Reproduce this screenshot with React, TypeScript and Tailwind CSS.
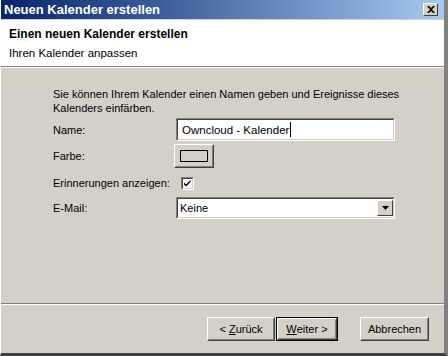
import React from 'react'

const font = { fontFamily: '"Liberation Sans", Arial, sans-serif' }

function ClassicButton({ children, primary, width }: { children: React.ReactNode; primary?: boolean; width: string }) {
  return (
    <div className={`${width} h-[24px] ${primary ? 'border border-black' : ''}`}>
      <div className="h-full border border-t-white border-l-white border-r-[#404040] border-b-[#404040]">
        <div className="flex h-full items-center justify-center border border-t-[#d4d0c8] border-l-[#d4d0c8] border-r-[#808080] border-b-[#808080] bg-[#d4d0c8] text-[11px] text-black">
          {children}
        </div>
      </div>
    </div>
  )
}

function Sunken({ children, className }: { children: React.ReactNode; className?: string }) {
  return (
    <div className={`border border-t-[#808080] border-l-[#808080] border-r-white border-b-white ${className ?? ''}`}>
      <div className="h-full border border-t-[#404040] border-l-[#404040] border-r-[#d4d0c8] border-b-[#d4d0c8] bg-white">
        {children}
      </div>
    </div>
  )
}

export default function App() {
  return (
    <div style={font} className="flex h-[356px] w-[448px] flex-col overflow-hidden border-r-[4px] border-b-[3px] border-r-[#808080] border-b-[#404040] border-l border-l-white bg-[#d4d0c8]">
      <div className="flex h-[19px] shrink-0 items-center justify-between bg-gradient-to-r from-[#0a246a] to-[#a6caf0] pl-[3px] pr-[6px]">
        <span className="text-[13px] font-bold text-white">Neuen Kalender erstellen</span>
        <div className="flex h-[13px] w-[15px] items-center justify-center border border-t-white border-l-white border-r-[#404040] border-b-[#404040] bg-[#d4d0c8]">
          <svg width="8" height="7" viewBox="0 0 8 7">
            <path d="M0 0h2l2 2 2-2h2L5 3.5 8 7H6L4 5 2 7H0l3-3.5z" fill="#000" />
          </svg>
        </div>
      </div>
      <div className="h-[1px] shrink-0 bg-[#d4d0c8]" />

      <div className="flex h-[46px] shrink-0 flex-col bg-white pl-[8px] pt-[8px]">
        <div className="text-[12px] font-bold leading-[13px] text-black">Einen neuen Kalender erstellen</div>
        <div className="mt-[6px] text-[11.5px] leading-[13px] text-black">Ihren Kalender anpassen</div>
      </div>
      <div className="h-[1px] shrink-0 bg-[#808080]" />
      <div className="h-[1px] shrink-0 bg-white" />

      <div className="flex-1 pl-[52px] pt-[19px] text-[11px] leading-[14px] text-black">
        <p>
          Sie können Ihrem Kalender einen Namen geben und Ereignisse dieses
          <br />
          Kalenders einfärben.
        </p>

        <div className="mt-[3px] flex h-[23px] items-center">
          <span className="w-[123px]">Name:</span>
          <Sunken className="h-[23px] w-[219px]">
            <div className="flex h-full items-center pl-[4px] text-[11.5px]">
              Owncloud - Kalender<span className="ml-[1px] inline-block h-[15px] w-[1px] bg-black" />
            </div>
          </Sunken>
        </div>

        <div className="mt-[3px] flex h-[24px] items-center">
          <span className="w-[121px]">Farbe:</span>
          <div className="border border-t-white border-l-white border-r-[#404040] border-b-[#404040]">
            <div className="flex h-[22px] w-[38px] items-center justify-center border border-t-[#d4d0c8] border-l-[#d4d0c8] border-r-[#808080] border-b-[#808080]">
              <div className="h-[12px] w-[28px] border border-black bg-[#d4d0c8]" />
            </div>
          </div>
        </div>

        <div className="mt-[3px] flex h-[24px] items-center">
          <span className="w-[128px]">Erinnerungen anzeigen:</span>
          <Sunken className="h-[13px] w-[13px]">
            <svg width="9" height="9" viewBox="0 0 9 9" className="block">
              <path d="M1 3.5l2 2 4.5-4.5v2L3 7.5 1 5.5z" fill="#000" />
            </svg>
          </Sunken>
        </div>

        <div className="mt-[2px] flex h-[22px] items-center">
          <span className="w-[123px]">E-Mail:</span>
          <Sunken className="h-[22px] w-[219px]">
            <div className="flex h-full items-center justify-between pl-[2px]">
              <span>Keine</span>
              <div className="flex h-[16px] w-[16px] items-center justify-center border border-t-white border-l-white border-r-[#404040] border-b-[#404040] bg-[#d4d0c8]">
                <svg width="7" height="4" viewBox="0 0 7 4">
                  <path d="M0 0h7L3.5 4z" fill="#000" />
                </svg>
              </div>
            </div>
          </Sunken>
        </div>
      </div>

      <div className="h-[1px] shrink-0 bg-[#808080]" />
      <div className="h-[1px] shrink-0 bg-white" />
      <div className="flex h-[48px] shrink-0 items-start justify-end gap-[1px] pr-[15px] pt-[12px]">
        <ClassicButton width="w-[68px]">
          &lt; <span className="ml-[3px] underline">Z</span>urück
        </ClassicButton>
        <ClassicButton primary width="w-[62px]">
          <span className="underline">W</span>eiter &gt;
        </ClassicButton>
        <div className="w-[20px]" />
        <ClassicButton width="w-[69px]">Abbrechen</ClassicButton>
      </div>
    </div>
  )
}
